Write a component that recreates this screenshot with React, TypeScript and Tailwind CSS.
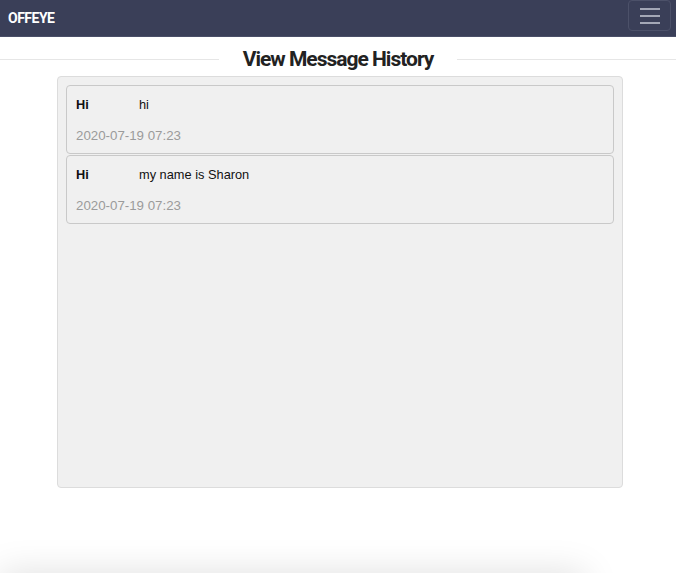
const messages = [
  { name: 'Hi', text: 'hi', time: '2020-07-19 07:23' },
  { name: 'Hi', text: 'my name is Sharon', time: '2020-07-19 07:23' },
];

const condensed = { fontFamily: 'Roboto, "DejaVu Sans", sans-serif' };

export default function App() {
  return (
    <div className="h-[573px] bg-white overflow-hidden" style={{ fontFamily: '"Liberation Sans", Arial, sans-serif' }}>
      <nav className="h-[37px] bg-[#3a3f58] border-b border-[#4a4f68] flex items-center justify-between pl-2 pr-[5px]">
        <span className="text-white font-bold text-[14px] tracking-[-0.5px]" style={condensed}>
          OFFEYE
        </span>
        <button className="w-[43px] h-[31px] -mt-[5px] rounded-[4px] border border-[#4c5169] flex flex-col items-center justify-center gap-[5px]">
          <span className="block w-[20px] h-[2px] bg-[#a3a7b6]" />
          <span className="block w-[20px] h-[2px] bg-[#a3a7b6]" />
          <span className="block w-[20px] h-[2px] bg-[#a3a7b6]" />
        </button>
      </nav>

      <div className="flex items-center mt-[8px] h-[28px]">
        <div className="flex-1 h-px bg-[#e6e6e6]" />
        <h1 className="px-[24px] text-[21px] font-bold tracking-[-1px] text-[#222] leading-none" style={condensed}>
          View Message History
        </h1>
        <div className="flex-1 h-px bg-[#e6e6e6]" />
      </div>

      <div className="ml-[57px] mt-[3px] w-[566px] h-[412px] bg-[#f0f0f0] border border-[#dcdcdc] rounded-[4px] p-[8px] flex flex-col gap-px">
        {messages.map((m, i) => (
          <div key={i} className="h-[69px] border-[1.5px] border-[#c9c9c9] rounded-[4px] bg-[#f0f0f0] px-[9px] pt-[10px]">
            <div className="flex items-center h-[18px] text-[12.8px] text-[#111]">
              <span className="w-[63px] font-bold">{m.name}</span>
              <span>{m.text}</span>
            </div>
            <div className="mt-[13px] h-[18px] flex items-center text-[13.3px] text-[#9b9b9b]">{m.time}</div>
          </div>
        ))}
      </div>

      <div className="mt-[85px] w-[585px] h-[40px] bg-white shadow-[0_0_36px_rgba(0,0,0,0.13)]" />
    </div>
  );
}
